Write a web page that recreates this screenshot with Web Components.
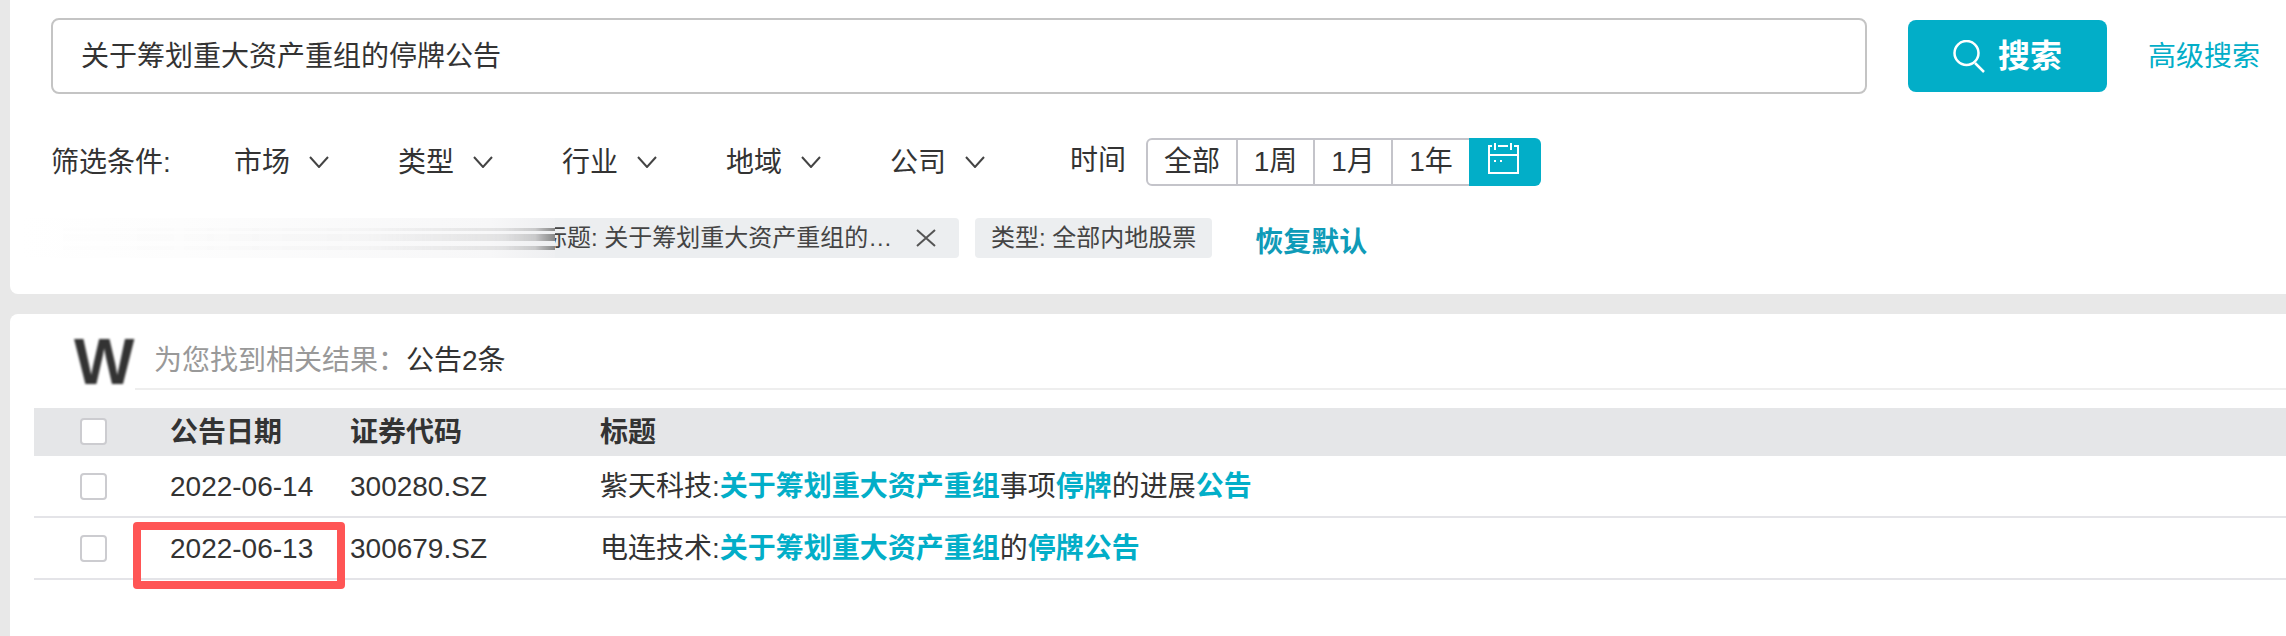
<!DOCTYPE html>
<html lang="zh">
<head>
<meta charset="utf-8">
<title>公告搜索</title>
<style>
  html, body { margin: 0; background: #e8e8e8; }
  body {
    width: 2286px;
    height: 636px;
    overflow: hidden;
    font-family: "Liberation Sans", "Noto Sans CJK SC", sans-serif;
    color: #333;
  }
</style>
</head>
<body>
<x-app></x-app>
<script>
function define(name, css, html, setup) {
  const template = document.createElement('template');
  template.innerHTML = `<style>${css}</style>${html}`;
  customElements.define(name, class extends HTMLElement {
    constructor() {
      super();
      this.attachShadow({mode: 'open'}).appendChild(template.content.cloneNode(true));
    }
    connectedCallback() {
      if (setup) setup(this, this.shadowRoot);
    }
  });
}

define('x-hl', ':host { color: #02aec8; font-weight: 700; }', '<slot></slot>');

define('x-search-bar', `
  :host { display: flex; align-items: center; height: 76px; }
  .input {
    box-sizing: border-box;
    width: 1816px;
    height: 76px;
    padding-left: 28px;
    border: 2px solid #c4c4c4;
    border-radius: 8px;
    font-size: 28px;
    line-height: 73px;
    color: #333;
  }
  button {
    display: flex;
    align-items: center;
    justify-content: center;
    gap: 12px;
    width: 199px;
    height: 72px;
    margin-left: 41px;
    border: 0;
    border-radius: 8px;
    background: #02aec8;
    color: #fff;
    font: 700 32px/40px "Liberation Sans", "Noto Sans CJK SC", sans-serif;
  }
  a { margin: 2px 0 0 41px; font-size: 28px; line-height: 40px; color: #02aec8; }
`, `
  <div class="input">关于筹划重大资产重组的停牌公告</div>
  <button type="button">
    <svg width="33" height="33" viewBox="0 0 33 33" fill="none" stroke="#fff" stroke-width="2.5">
      <circle cx="13.5" cy="13" r="12"/>
      <path d="M22 23l9 9"/>
    </svg>
    <span>搜索</span>
  </button>
  <a>高级搜索</a>
`);

define('x-drop', `
  :host { display: flex; align-items: center; gap: 19px; width: 164px; font-size: 28px; line-height: 40px; }
  span { width: 56px; padding-top: 2px; }
`, `
  <span><slot></slot></span>
  <svg width="20" height="12" viewBox="0 0 20 12" fill="none" stroke="#444" stroke-width="2"><path d="M1 1l9 10 9-10"/></svg>
`);

define('x-range', `
  :host { display: flex; height: 48px; font-size: 28px; line-height: 44px; }
  div {
    box-sizing: border-box;
    height: 48px;
    border: 2px solid #c4c4ca;
    border-left: 0;
    text-align: center;
    color: #333;
  }
  .all { width: 92px; border-left: 2px solid #c4c4ca; border-radius: 6px 0 0 6px; }
  .week { width: 77px; }
  .month { width: 78px; }
  .year { width: 76px; border-right: 0; }
  .cal {
    display: flex;
    align-items: center;
    justify-content: center;
    width: 72px;
    padding: 0 4px 6px 0;
    border: 0;
    border-radius: 0 6px 6px 0;
    background: #02aec8;
  }
`, `
  <div class="all">全部</div>
  <div class="week">1周</div>
  <div class="month">1月</div>
  <div class="year">1年</div>
  <div class="cal">
    <svg width="34" height="34" viewBox="0 0 34 34" fill="none" stroke="#fff" stroke-width="2">
      <path d="M6 4H3V31H32V4H28M12 4H22M3 13H32M9 1V8M25 1V8"/>
      <path d="M8 19h2M14 19h2"/>
    </svg>
  </div>
`);

define('x-filters', `
  :host { display: flex; align-items: center; height: 48px; margin-top: 44px; font-size: 28px; line-height: 40px; }
  .label { width: 183px; padding-top: 2px; }
  .time { margin: 0 20px 2px 16px; }
`, `
  <span class="label">筛选条件:</span>
  <x-drop>市场</x-drop>
  <x-drop>类型</x-drop>
  <x-drop>行业</x-drop>
  <x-drop>地域</x-drop>
  <x-drop>公司</x-drop>
  <span class="time">时间</span>
  <x-range></x-range>
`);

define('x-tag', `
  :host {
    display: flex;
    align-items: center;
    box-sizing: border-box;
    height: 40px;
    padding: 0 16px;
    border-radius: 4px;
    background: #eceef0;
    font-size: 24px;
    line-height: 36px;
    color: #444;
  }
  .text { display: block; }
  :host([closable]) { padding: 0 23px 0 16px; }
  :host([closable]) .text { width: 351px; white-space: nowrap; overflow: hidden; text-overflow: ellipsis; }
  svg { display: none; margin-left: 22px; }
  :host([closable]) svg { display: block; }
`, `
  <span class="text"><slot></slot></span>
  <svg width="20" height="18" viewBox="0 0 20 18" fill="none" stroke="#555" stroke-width="2"><path d="M1 1l18 16M19 1L1 17"/></svg>
`);

// the smeared part of the first tag in the source picture
define('x-smear', `
  :host {
    position: absolute;
    left: -31px;
    top: 0;
    width: 535px;
    height: 40px;
    background: linear-gradient(to right, #fff 0, #fdfdfd 30%, #f7f7f8 88%, #eeeff1 100%);
  }
  div {
    position: absolute;
    right: 0;
    top: 0;
    height: 40px;
    background:
      linear-gradient(#888, #888) 0 10px / 100% 3px no-repeat,
      linear-gradient(#888, #888) 0 16px / 100% 7px no-repeat,
      linear-gradient(#888, #888) 0 28px / 100% 4px no-repeat;
  }
  .long {
    width: 535px;
    opacity: .3;
    -webkit-mask-image: linear-gradient(to right, transparent 0, rgba(0,0,0,.05) 30%, rgba(0,0,0,.15) 65%, rgba(0,0,0,.6) 90%, #000 100%);
    mask-image: linear-gradient(to right, transparent 0, rgba(0,0,0,.05) 30%, rgba(0,0,0,.15) 65%, rgba(0,0,0,.6) 90%, #000 100%);
  }
  .short {
    width: 50px;
    -webkit-mask-image: linear-gradient(to right, transparent 0, rgba(0,0,0,.15) 60%, #000 100%);
    mask-image: linear-gradient(to right, transparent 0, rgba(0,0,0,.15) 60%, #000 100%);
  }
`, '<div class="long"></div><div class="short"></div>');

define('x-tags', `
  :host { display: flex; position: relative; height: 40px; margin-top: 32px; padding-left: 476px; }
  x-tag + x-tag { margin-left: 16px; }
  a { margin: 5px 0 0 43px; font-size: 28px; font-weight: 700; line-height: 40px; color: #0f9bb8; }
`, `
  <x-tag closable>标题: 关于筹划重大资产重组的停牌公告</x-tag>
  <x-tag>类型: 全部内地股票</x-tag>
  <a>恢复默认</a>
  <x-smear></x-smear>
`);

define('x-filter-card', `
  :host {
    display: block;
    box-sizing: border-box;
    height: 294px;
    margin-left: 10px;
    padding: 18px 0 0 41px;
    background: #fff;
    border-radius: 0 0 0 8px;
  }
`, '<x-search-bar></x-search-bar><x-filters></x-filters><x-tags></x-tags>');

define('x-check', `
  :host {
    display: block;
    box-sizing: border-box;
    width: 27px;
    height: 27px;
    border: 2px solid #ccccd0;
    border-radius: 4px;
    background: #fff;
  }
`, '');

define('x-result-head', `
  :host { display: flex; height: 76px; padding-left: 64px; }
  .logo {
    width: 60px;
    height: 76px;
    font: 700 64px/96px "Liberation Sans", sans-serif;
    color: #333;
    filter: blur(1px);
  }
  .info {
    flex: 1;
    box-sizing: border-box;
    height: 76px;
    margin-left: 1px;
    padding: 25px 0 0 19px;
    border-bottom: 2px solid #eee;
    font-size: 28px;
    line-height: 44px;
    color: #333;
  }
  .info span { color: #999; }
`, `
  <div class="logo">W</div>
  <div class="info"><span>为您找到相关结果：</span>公告2条</div>
`);

define('x-table-head', `
  :host {
    display: grid;
    grid-template-columns: 136px 180px 250px 1fr;
    align-items: center;
    height: 48px;
    margin-top: 18px;
    background: #e5e6e8;
    font-size: 28px;
    font-weight: 700;
    line-height: 40px;
    color: #333;
  }
  span { padding-top: 2px; }
  x-check { margin: -1px 0 0 46px; }
`, '<x-check></x-check><span>公告日期</span><span>证券代码</span><span>标题</span>');

define('x-row', `
  :host {
    display: grid;
    grid-template-columns: 136px 180px 250px 1fr;
    align-items: center;
    position: relative;
    box-sizing: border-box;
    height: 62px;
    border-bottom: 2px solid #e4e4e8;
    font-size: 28px;
    line-height: 40px;
    color: #333;
  }
  span { padding-top: 1px; }
  x-check { margin-left: 46px; }
  .mark {
    display: none;
    position: absolute;
    left: 99px;
    top: 4px;
    box-sizing: border-box;
    width: 212px;
    height: 67px;
    border: 8px solid #ff5555;
    border-radius: 4px;
  }
  :host([marked]) .mark { display: block; }
`, `
  <x-check></x-check>
  <span class="date"></span>
  <span class="code"></span>
  <span><slot></slot></span>
  <div class="mark"></div>
`, (el, root) => {
  root.querySelector('.date').textContent = el.getAttribute('date');
  root.querySelector('.code').textContent = el.getAttribute('code');
});

define('x-result-card', `
  :host {
    display: block;
    box-sizing: border-box;
    height: 322px;
    margin: 20px 0 0 10px;
    background: #fff;
    border-radius: 8px 0 0 0;
  }
  .table { margin-left: 24px; }
`, `
  <x-result-head></x-result-head>
  <div class="table">
    <x-table-head></x-table-head>
    <slot></slot>
  </div>
`);

define('x-app', ':host { display: block; }', `
  <x-filter-card></x-filter-card>
  <x-result-card>
    <x-row date="2022-06-14" code="300280.SZ">紫天科技:<x-hl>关于筹划重大资产重组</x-hl>事项<x-hl>停牌</x-hl>的进展<x-hl>公告</x-hl></x-row>
    <x-row date="2022-06-13" code="300679.SZ" marked>电连技术:<x-hl>关于筹划重大资产重组</x-hl>的<x-hl>停牌公告</x-hl></x-row>
  </x-result-card>
`);
</script>
</body>
</html>
